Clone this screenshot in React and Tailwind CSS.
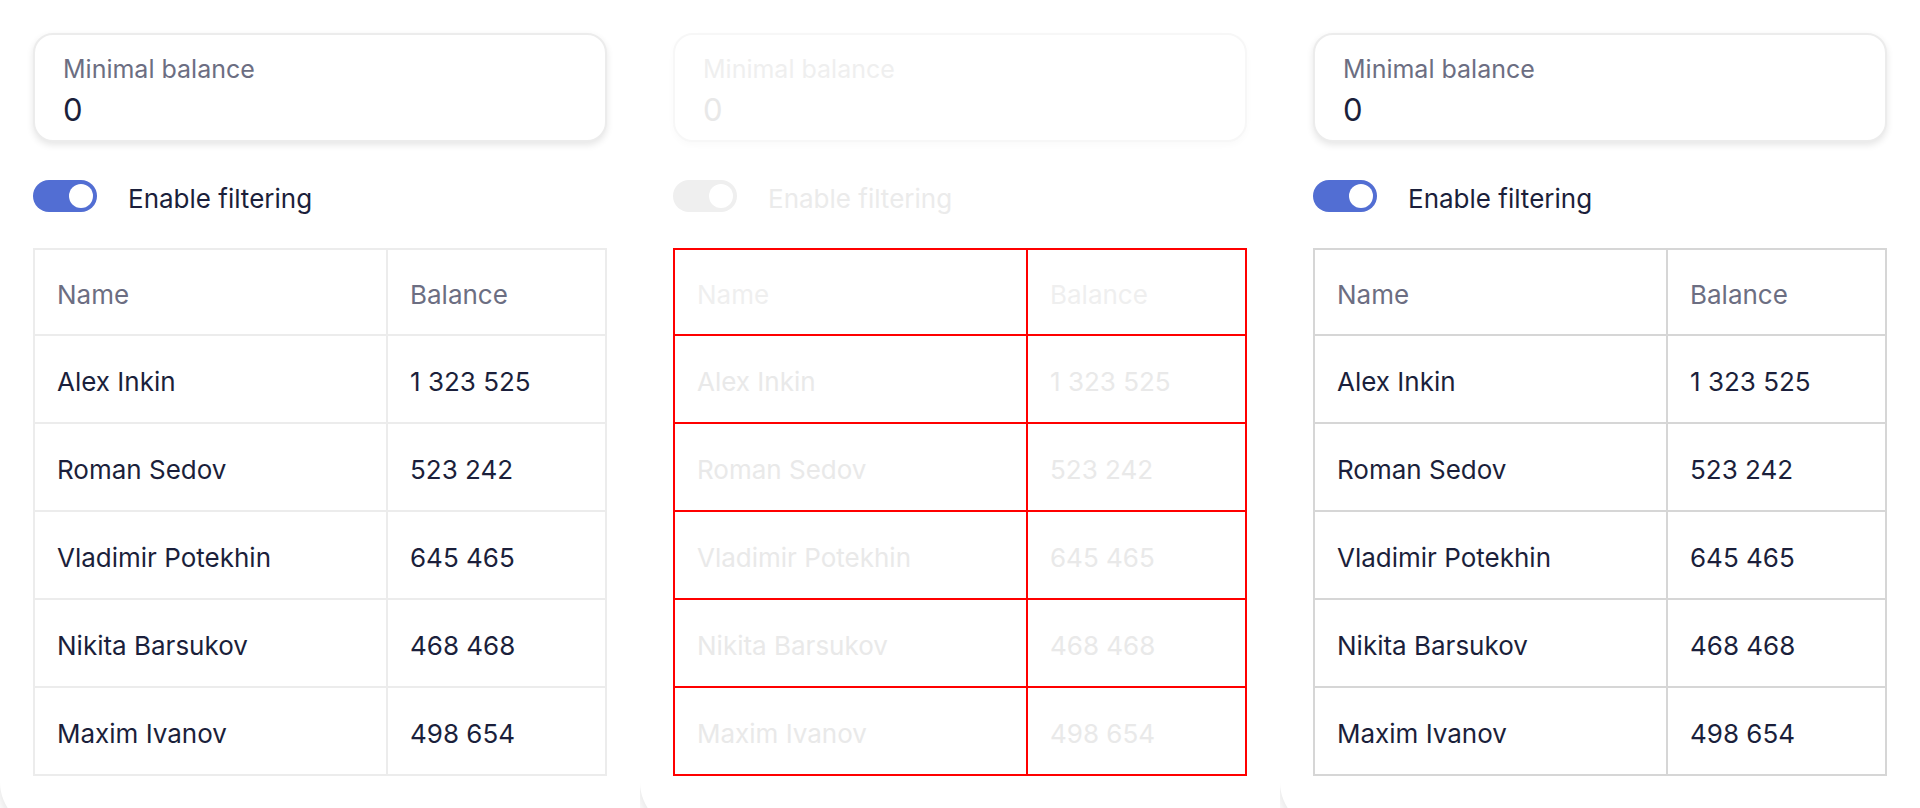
import React from "react";

const rows = [
  { name: "Alex Inkin", balance: "1 323 525" },
  { name: "Roman Sedov", balance: "523 242" },
  { name: "Vladimir Potekhin", balance: "645 465" },
  { name: "Nikita Barsukov", balance: "468 468" },
  { name: "Maxim Ivanov", balance: "498 654" },
];

// three looks of the same demo block
const variants = [
  {
    key: "base",
    z: "z-30",
    field: "border-[#ececec] shadow-[0_3px_7px_rgba(0,0,0,0.1)]",
    label: "text-[#6c6e82]",
    value: "text-[#1b1f3b]",
    toggle: "bg-[#526ed3]",
    toggleText: "text-[#1b1f3b]",
    border: "border-[#ececec]",
    head: "text-[#6c6e82]",
    cell: "text-[#1b1f3b]",
  },
  {
    key: "disabled",
    z: "z-20",
    field: "border-[#f7f7f7] shadow-[0_3px_7px_rgba(0,0,0,0.025)]",
    label: "text-[#efefef]",
    value: "text-[#e8e8e8]",
    toggle: "bg-[#efefef]",
    toggleText: "text-[#ebebeb]",
    border: "border-[#ff0000]",
    head: "text-[#efefef]",
    cell: "text-[#e9e9e9]",
  },
  {
    key: "outlined",
    z: "z-10",
    field: "border-[#ececec] shadow-[0_3px_7px_rgba(0,0,0,0.1)]",
    label: "text-[#6c6e82]",
    value: "text-[#1b1f3b]",
    toggle: "bg-[#526ed3]",
    toggleText: "text-[#1b1f3b]",
    border: "border-[#d6d6d6]",
    head: "text-[#6c6e82]",
    cell: "text-[#1b1f3b]",
  },
];

function Toggle({ className }) {
  return (
    <div className={`flex h-8 w-16 shrink-0 items-center justify-end rounded-full pr-1 ${className}`}>
      <div className="size-6 rounded-full bg-white" />
    </div>
  );
}

function Block({ v }) {
  return (
    <div
      className={`relative ${v.z} h-[830px] w-[640px] shrink-0 rounded-bl-[48px] bg-white px-[33px] pt-[33px] shadow-[-6px_6px_10px_-4px_rgba(0,0,0,0.09)]`}
    >
      {/* textfield */}
      <div className={`h-[109px] rounded-[20px] border-2 bg-white pl-[28px] pt-[19px] ${v.field}`}>
        <div className={`text-[25px] leading-[30px] ${v.label}`}>Minimal balance</div>
        <div className={`mt-2 text-[31px] leading-[36px] ${v.value}`}>0</div>
      </div>

      {/* switch */}
      <div className="mt-[38px] flex h-8 items-center gap-[31px]">
        <Toggle className={v.toggle} />
        <span className={`mt-[5px] text-[26px] leading-8 ${v.toggleText}`}>Enable filtering</span>
      </div>

      {/* table */}
      <div className={`mt-9 grid grid-cols-[353px_1fr] border-l-2 border-t-2 ${v.border}`}>
        <div className={`flex h-[86px] items-center border-b-2 border-r-2 px-[22px] pt-[5px] text-[26px] ${v.border} ${v.head}`}>
          Name
        </div>
        <div className={`flex h-[86px] items-center border-b-2 border-r-2 px-[22px] pt-[5px] text-[26px] ${v.border} ${v.head}`}>
          Balance
        </div>
        {rows.map((r) => (
          <React.Fragment key={r.name}>
            <div className={`flex h-[88px] items-center border-b-2 border-r-2 px-[22px] pt-[5px] text-[26px] ${v.border} ${v.cell}`}>
              {r.name}
            </div>
            <div className={`flex h-[88px] items-center border-b-2 border-r-2 px-[22px] pt-[5px] text-[26px] ${v.border} ${v.cell}`}>
              {r.balance}
            </div>
          </React.Fragment>
        ))}
      </div>
    </div>
  );
}

export default function App() {
  return (
    <div className="flex h-[808px] w-[1920px] overflow-hidden bg-white font-['Inter',sans-serif] antialiased">
      {variants.map((v) => (
        <Block key={v.key} v={v} />
      ))}
    </div>
  );
}
